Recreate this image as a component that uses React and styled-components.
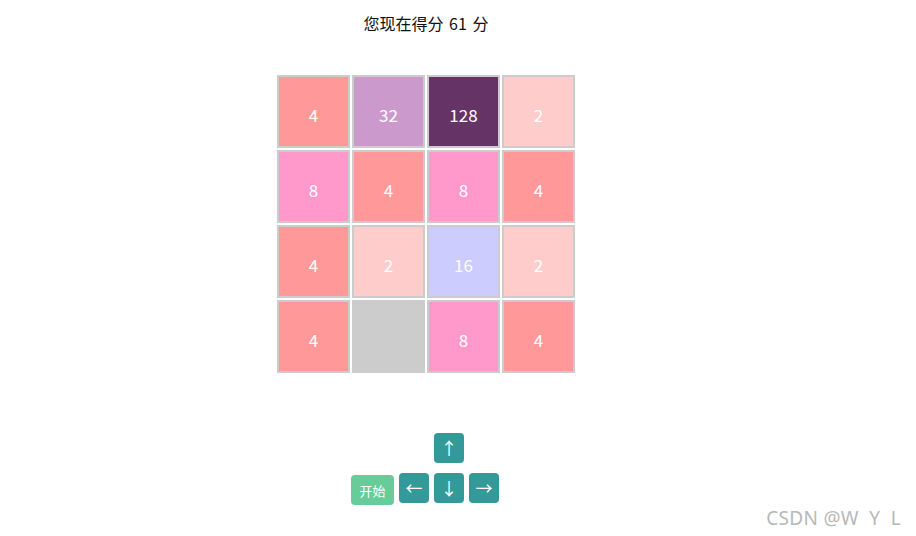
import styled, { createGlobalStyle } from 'styled-components'

const GlobalStyle = createGlobalStyle`
  html, body {
    margin: 0;
    padding: 0;
    background: #ffffff;
  }
  body {
    font-family: "Noto Sans CJK SC", "Noto Sans", sans-serif;
    width: 916px;
    height: 536px;
    overflow: hidden;
    position: relative;
  }
`

const Page = styled.div`
  width: 852px;
  display: flex;
  flex-direction: column;
  align-items: center;
`

const Score = styled.div`
  margin-top: 12px;
  font-size: 16px;
  line-height: 22px;
  word-spacing: 2px;
  color: #111;
`

const Board = styled.div`
  margin-top: 41px;
  display: grid;
  grid-template-columns: repeat(4, 73px);
  grid-auto-rows: 73px;
  gap: 2px;
`

const tileColors = {
  0: '#cccccc',
  2: '#ffcccc',
  4: '#ff9999',
  8: '#ff99cc',
  16: '#ccccff',
  32: '#cc99cc',
  128: '#663366',
}

const Tile = styled.div`
  box-sizing: border-box;
  border: 2px solid #cccccc;
  background: ${(props) => tileColors[props.value] || '#cccccc'};
  color: #ffffff;
  font-size: 17px;
  display: flex;
  align-items: center;
  justify-content: center;
  padding-top: 5px;
`

const Controls = styled.div`
  margin-top: 60px;
  margin-right: 2px;
  display: grid;
  grid-template-columns: 43px 30px 30px 30px;
  grid-template-rows: 30px 32px;
  column-gap: 5px;
  row-gap: 10px;
`

const KeyButton = styled.button`
  box-sizing: border-box;
  width: 30px;
  height: 30px;
  padding: 0;
  border: none;
  border-radius: 4px;
  background: #339999;
  color: #ffffff;
  font-family: "Noto Sans CJK SC", "Noto Sans", sans-serif;
  font-size: 17px;
  line-height: 30px;
  cursor: pointer;
  align-self: start;
  grid-column: ${(props) => props.col};
  grid-row: ${(props) => props.row};
`

const StartButton = styled.button`
  box-sizing: border-box;
  width: 43px;
  height: 30px;
  padding: 0;
  border: none;
  border-radius: 4px;
  background: #66cc99;
  color: #ffffff;
  font-family: "Noto Sans CJK SC", "Noto Sans", sans-serif;
  font-size: 13px;
  cursor: pointer;
  grid-column: 1;
  grid-row: 2;
  align-self: end;
`

const Watermark = styled.div`
  position: absolute;
  right: 15px;
  bottom: 5px;
  font-size: 19px;
  letter-spacing: 0.3px;
  color: #b8b8b8;
  white-space: pre;
  font-family: "Noto Sans", sans-serif;
`

const board = [
  [4, 32, 128, 2],
  [8, 4, 8, 4],
  [4, 2, 16, 2],
  [4, 0, 8, 4],
]

function App() {
  return (
    <>
      <GlobalStyle />
      <Page>
        <Score>您现在得分 61 分</Score>
        <Board>
          {board.flat().map((v, i) => (
            <Tile key={i} value={v}>{v ? v : ''}</Tile>
          ))}
        </Board>
        <Controls>
          <KeyButton col={3} row={1}>↑</KeyButton>
          <StartButton>开始</StartButton>
          <KeyButton col={2} row={2}>←</KeyButton>
          <KeyButton col={3} row={2}>↓</KeyButton>
          <KeyButton col={4} row={2}>→</KeyButton>
        </Controls>
      </Page>
      <Watermark>CSDN @W  Y  L</Watermark>
    </>
  )
}

export default App
